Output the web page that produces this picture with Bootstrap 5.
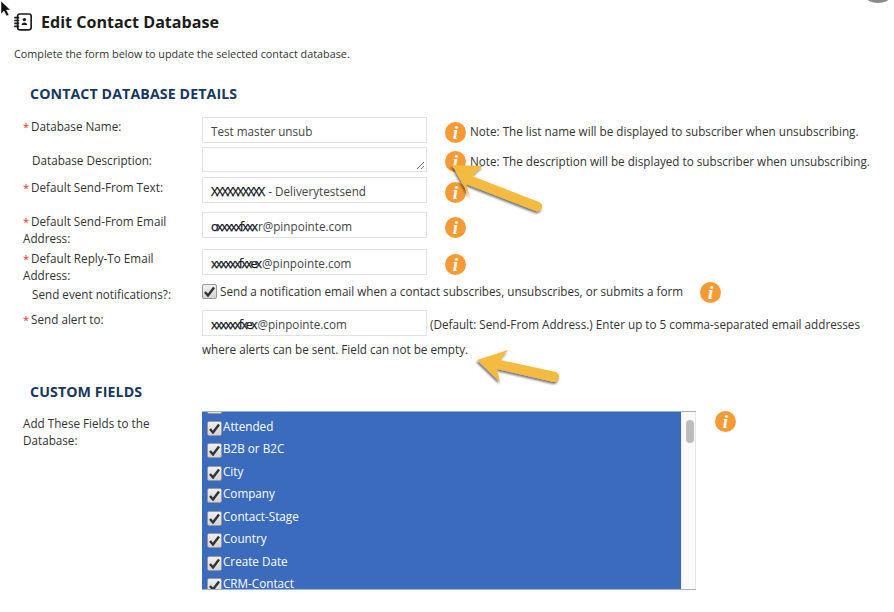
<!doctype html>
<html lang="en"><head><meta charset="utf-8"><title>Edit Contact Database</title>
<link href="https://cdn.jsdelivr.net/npm/bootstrap@5.3.0/dist/css/bootstrap.min.css" rel="stylesheet">
<style>
html,body{height:100%;overflow:hidden;background:#fff}
body{font-family:"Open Sans",sans-serif;font-size:11.7px;line-height:17px;color:#333;position:relative}
.page-head{padding:0 0 0 14px;gap:9px;height:44px}
.page-head h1{font-size:16.1px;font-weight:700;color:#1c1c1c;margin:0;line-height:18px}
.page-intro{margin:0 0 0 14px;height:40px;padding-top:1px;font-size:10.8px}
.sect-title{font-size:14.2px;font-weight:700;color:#17375e;margin:0;padding-left:30px;line-height:20px;letter-spacing:.1px}
.frow{display:flex;align-items:flex-start}
.flabel{width:202px;padding-left:23px;padding-right:30px;padding-top:1px;flex:none;margin:0}
.flabel-nw{white-space:nowrap;padding-right:0}
.req{color:#d9342b;margin-right:2px;font-size:11px;line-height:1}
.ftext{width:225px;height:26px;border:1px solid #e2e2e2;background:#fff;padding:0 8px;line-height:27px;color:#444;flex:none;white-space:nowrap;overflow:hidden}
.farea{height:25px;position:relative}
.grip{position:absolute;right:1px;bottom:1px}
.scrib{display:inline-block;color:#111;font-size:12.5px;line-height:14px;-webkit-text-stroke:.25px #123}
.scrib-caps{letter-spacing:-2px;margin-right:2px}
.scrib-low{letter-spacing:-1.9px;margin-right:1.9px}
.infod{width:21px;height:21px;border-radius:50%;background:#f59a35;color:#fff;font-family:"Liberation Serif",serif;font-style:italic;font-weight:700;font-size:19px;line-height:21px;text-align:center;flex:none;display:block}
.note{white-space:nowrap;margin-left:4px}
.cbx{width:15px;height:15px;flex:none;border:1px solid #999;border-radius:2px;background:linear-gradient(#f0f0f0,#d4d4d4);display:flex;align-items:center;justify-content:center}
.lbox{width:494px;height:179px;border-top:1px solid #9fb4cf;border-bottom:1px solid #9fb4cf;position:relative;overflow:hidden;display:flex;background:#fafafa}
.lblue{width:479px;background:#3a6bbd;color:#fff;height:100%;overflow:hidden}
.litem{height:22.5px;display:flex;align-items:center;padding-left:5px;gap:1px}
.litem .cbx{position:relative;top:2px}
.lcut{height:3px;overflow:hidden;padding-left:5px}
.lcut .cbx{height:2px;border-top:0;border-radius:0 0 2px 2px}
.ltrack{flex:1;border-left:1px solid #eee;border-right:1px solid #e6e6e6;position:relative}
.lthumb{display:block;width:8px;height:23px;border-radius:4px;background:#bdbdbd;margin:8px 0 0 4px}
.overlay{position:absolute;pointer-events:none}
.arrows{left:0;top:0;width:894px;height:612px}
</style></head>
<body>
<header class="page-head d-flex align-items-center">
<svg width="18" height="18" viewBox="0 0 18 18" fill="none" stroke="#1c1c1c" stroke-width="1.7" aria-hidden="true"><rect x="3.6" y="1" width="13.6" height="15.8" rx="2.2"/><path d="M.2 4.6h5M.2 7.5h5M.2 10.4h5M.2 13.3h5"/><circle cx="10.4" cy="6.6" r="1.7" fill="#1c1c1c" stroke="none"/><path d="M7.6 12c0-1.8 1.2-2.6 2.8-2.6s2.8.8 2.8 2.6z" fill="#1c1c1c" stroke="none"/></svg>
<h1>Edit Contact Database</h1>
</header>
<p class="page-intro">Complete the form below to update the selected contact database.</p>
<h2 class="sect-title" style="margin-bottom:13px">CONTACT DATABASE DETAILS</h2>
<form>
<div class="frow" style="height:30px"><label class="flabel"><span class="req">*</span>Database Name:</label><div class="ftext">Test master unsub</div><span class="infod" style="margin:5px 0 0 18px">i</span><span class="note" style="margin-top:6px">Note: The list name will be displayed to subscriber when unsubscribing.</span></div>
<div class="frow" style="height:30px"><label class="flabel" style="padding-top:5px;padding-left:32px">Database Description:</label><div class="ftext farea"><svg class="grip" width="9" height="9" viewBox="0 0 9 9" stroke="#777"><path d="M1 8L8 1M5 8L8 5"/></svg></div><span class="infod" style="margin:4px 0 0 18px">i</span><span class="note" style="margin-top:6px">Note: The description will be displayed to subscriber when unsubscribing.</span></div>
<div class="frow" style="height:35px"><label class="flabel" style="padding-top:2px"><span class="req">*</span>Default Send-From Text:</label><div class="ftext"><span class="scrib scrib-caps">XXXXXXXXXX</span> - Deliverytestsend</div><span class="infod" style="margin:5px 0 0 18px">i</span></div>
<div class="frow" style="height:37px"><label class="flabel"><span class="req">*</span>Default Send-From Email Address:</label><div class="ftext"><span class="scrib scrib-low">oxxxxxfxxx</span>r@pinpointe.com</div><span class="infod" style="margin:5px 0 0 18px">i</span></div>
<div class="frow" style="height:35px"><label class="flabel"><span class="req">*</span>Default Reply-To Email Address:</label><div class="ftext"><span class="scrib scrib-low">xxxxxxfxxex</span>@pinpointe.com</div><span class="infod" style="margin:5px 0 0 18px">i</span></div>
<div class="frow" style="height:26px"><label class="flabel flabel-nw" style="padding-left:32px;padding-top:2px">Send event notifications?:</label><span class="cbx"><svg width="11" height="11" viewBox="0 0 11 11"><path d="M1 6l3 3.5L10 1.5" fill="none" stroke="#333" stroke-width="2.4"/></svg></span><span class="note" style="margin-left:3px;margin-top:-1px">Send a notification email when a contact subscribes, unsubscribes, or submits a form</span><span class="infod" style="margin:-2px 0 0 17px">i</span></div>
<div class="frow" style="height:26px"><label class="flabel"><span class="req">*</span>Send alert to:</label><div class="ftext"><span class="scrib scrib-low">xxxxxxfxex</span>@pinpointe.com</div><span class="note" style="margin-left:3px;margin-top:6px">(Default: Send-From Address.) Enter up to 5 comma-separated email addresses</span></div>
<p class="mb-0" style="margin-left:202px;height:46px;padding-top:5px">where alerts can be sent. Field can not be empty.</p>
<h2 class="sect-title" style="margin-bottom:9px">CUSTOM FIELDS</h2>
<div class="frow"><label class="flabel" style="padding-top:4px">Add These Fields to the Database:</label>
<div class="lbox"><div class="lblue">
<div class="lcut"><span class="cbx"></span></div>
<div class="litem"><span class="cbx"><svg width="11" height="11" viewBox="0 0 11 11"><path d="M1 6l3 3.5L10 1.5" fill="none" stroke="#333" stroke-width="2.4"/></svg></span>Attended</div>
<div class="litem"><span class="cbx"><svg width="11" height="11" viewBox="0 0 11 11"><path d="M1 6l3 3.5L10 1.5" fill="none" stroke="#333" stroke-width="2.4"/></svg></span>B2B or B2C</div>
<div class="litem"><span class="cbx"><svg width="11" height="11" viewBox="0 0 11 11"><path d="M1 6l3 3.5L10 1.5" fill="none" stroke="#333" stroke-width="2.4"/></svg></span>City</div>
<div class="litem"><span class="cbx"><svg width="11" height="11" viewBox="0 0 11 11"><path d="M1 6l3 3.5L10 1.5" fill="none" stroke="#333" stroke-width="2.4"/></svg></span>Company</div>
<div class="litem"><span class="cbx"><svg width="11" height="11" viewBox="0 0 11 11"><path d="M1 6l3 3.5L10 1.5" fill="none" stroke="#333" stroke-width="2.4"/></svg></span>Contact-Stage</div>
<div class="litem"><span class="cbx"><svg width="11" height="11" viewBox="0 0 11 11"><path d="M1 6l3 3.5L10 1.5" fill="none" stroke="#333" stroke-width="2.4"/></svg></span>Country</div>
<div class="litem"><span class="cbx"><svg width="11" height="11" viewBox="0 0 11 11"><path d="M1 6l3 3.5L10 1.5" fill="none" stroke="#333" stroke-width="2.4"/></svg></span>Create Date</div>
<div class="litem"><span class="cbx"><svg width="11" height="11" viewBox="0 0 11 11"><path d="M1 6l3 3.5L10 1.5" fill="none" stroke="#333" stroke-width="2.4"/></svg></span>CRM-Contact</div>
</div><div class="ltrack"><span class="lthumb"></span></div></div>
<span class="infod" style="margin:0 0 0 19px">i</span></div>
</form>
<svg class="overlay arrows" viewBox="0 0 894 612" aria-hidden="true">
<defs><filter id="sh" x="-20%" y="-20%" width="140%" height="140%"><feDropShadow dx="-1" dy="2" stdDeviation="1.2" flood-color="#000" flood-opacity=".55"/></filter></defs>
<path d="M452 165L483 166L472 176L539 202Q543 204 542 208Q540 212 536 211L466 184L470 197Z" fill="#f5bb3f" filter="url(#sh)"/>
<path d="M477 360L508 350L500 360L556 372Q560 374 559 378Q558 382 554 382L497 369L500 382Z" fill="#f5bb3f" filter="url(#sh)"/>
<path d="M1 1L1 14L4 11L6.5 16L9 15L6.5 10L10.5 10Z" fill="#111" stroke="#fff" stroke-width=".5"/>
<ellipse cx="878" cy="-2" rx="11" ry="5" fill="#8a8a8a"/>
</svg>
</body></html>
